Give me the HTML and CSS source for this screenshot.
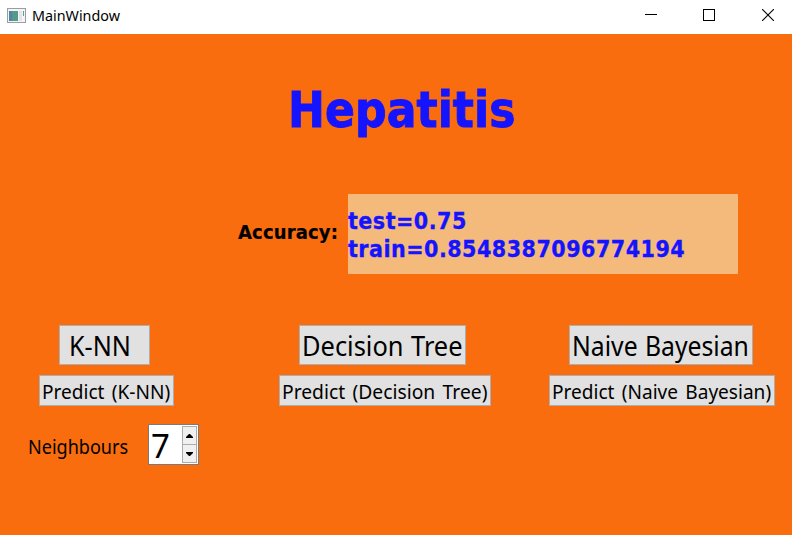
FILE: index.html
```html
<!DOCTYPE html>
<html lang="en">
<head>
<meta charset="utf-8">
<title>MainWindow</title>
<link rel="stylesheet" href="styles.css">
</head>
<body>
<header class="titlebar">
  <svg class="app-icon" width="19" height="15" viewBox="0 0 19 15">
    <rect x=".5" y=".5" width="18" height="14" fill="#f4f4f4" stroke="#9a9da1"/>
    <rect x="2" y="3" width="9" height="10" fill="#559987"/>
    <rect x="2" y="3" width="3" height="10" fill="#5485a0"/>
    <rect x="12" y="3" width="3" height="10" fill="#e2e6ea"/>
    <path d="M16.5 3v5" stroke="#5da18e"/>
  </svg>
  <span class="window-title">MainWindow</span>
  <div class="controls">
    <svg width="12" height="12"><path d="M0 5.5h12" stroke="#000"/></svg>
    <svg width="12" height="12"><rect x=".5" y=".5" width="11" height="11" fill="none" stroke="#000"/></svg>
    <svg width="12" height="12"><path d="M0 0l12 12M12 0L0 12" stroke="#000" stroke-width="1.1"/></svg>
  </div>
</header>
<main>
  <h1>Hepatitis</h1>
  <section class="accuracy">
    <span class="accuracy-label">Accuracy:</span>
    <div class="result"><span class="test">test=0.75</span><span class="train">train=0.8548387096774194</span></div>
  </section>
  <section class="models">
    <div class="model">
      <button class="big knn"><span>K-NN</span></button>
      <button class="small knn-predict"><span>Predict (K-NN)</span></button>
    </div>
    <div class="model">
      <button class="big tree"><span>Decision Tree</span></button>
      <button class="small tree-predict"><span>Predict (Decision Tree)</span></button>
    </div>
    <div class="model">
      <button class="big bayes"><span>Naive Bayesian</span></button>
      <button class="small bayes-predict"><span>Predict (Naive Bayesian)</span></button>
    </div>
  </section>
  <section class="neighbours">
    <div class="neighbours-label"><span>Neighbours</span></div>
    <div class="spin">
      <span class="value">7</span>
      <div class="steps">
        <i><svg width="7" height="4"><path d="M0 4V3L3 0h1l3 3v1z"/></svg></i>
        <i><svg width="7" height="4"><path d="M0 0v1l3 3h1l3-3V0z"/></svg></i>
      </div>
    </div>
  </section>
</main>
</body>
</html>
```
FILE: styles.css
```css
* { box-sizing: border-box; }
body {
  margin: 0;
  height: 535px;
  overflow: hidden;
  background: #fa6d0e;
  color: #000;
  font-family: "Noto Sans", sans-serif;
  white-space: nowrap;
}
svg { display: block; }
.titlebar {
  display: flex;
  align-items: center;
  height: 34px;
  padding: 0 18px 4px 7px;
  background: #fff;
}
.window-title {
  margin-left: 6px;
  font-size: 15px;
  line-height: 20px;
  transform: scaleX(.955);
  transform-origin: left;
}
.controls { display: flex; gap: 47px; margin-left: auto; }
.controls svg:first-child { margin-right: -1px; }
h1, .accuracy {
  font-family: "DejaVu Sans Condensed", "DejaVu Sans", sans-serif;
  font-stretch: condensed;
  font-weight: 700;
}
h1 {
  margin: 42px 0 0;
  height: 68px;
  padding-left: 288px;
  font-size: 49px;
  line-height: 70px;
  letter-spacing: .1px;
  color: #1414ff;
  -webkit-text-stroke: .9px;
}
button span, .neighbours-label span {
  display: inline-block;
  transform-origin: left;
}
.accuracy {
  display: flex;
  align-items: center;
  margin-top: 50px;
  padding-left: 238px;
}
.accuracy-label {
  width: 110px;
  padding-bottom: 4px;
  font-size: 20px;
  line-height: 24px;
  letter-spacing: .15px;
  -webkit-text-stroke: .2px;
}
.result {
  display: flex;
  flex-direction: column;
  align-items: flex-start;
  justify-content: center;
  width: 390px;
  height: 80px;
  padding-top: 2px;
  background: #f4ba7b;
  color: #1414ff;
  font-size: 23px;
  line-height: 28px;
  letter-spacing: .47px;
  -webkit-text-stroke: .3px;
}
.models {
  display: grid;
  grid-template-columns: 240px 270px 244px;
  margin: 51px 0 0 39px;
}
.model { display: flex; flex-direction: column; align-items: flex-start; gap: 10px; }
button {
  display: flex;
  align-items: center;
  border: 1px solid #adadad;
  background: #e1e1e1;
  color: #000;
  font-family: inherit;
  padding: 0 0 0 2px;
}
.big { height: 40px; margin-left: 20px; font-size: 27.2px; line-height: 38px; padding-top: 1px; }
.small { height: 31px; font-size: 20.4px; line-height: 29px; padding-top: 2px; }
.small span { transform: scaleX(.935); word-spacing: 2.5px; }
.knn { width: 91px; padding-left: 9px; }
.knn span { transform: scaleX(.925); }
.knn-predict { width: 135px; }
.tree { width: 167px; }
.tree span { transform: scaleX(.935); word-spacing: 1px; }
.tree-predict { width: 212px; }
.tree-predict span { transform: scaleX(.945); }
.bayes { width: 184px; }
.bayes span { transform: scaleX(.91); word-spacing: 1px; }
.bayes-predict { width: 226px; }
.neighbours { display: flex; align-items: center; margin: 18px 0 0 28px; }
.neighbours-label { width: 120px; font-size: 20.4px; line-height: 28px; padding-top: 3px; }
.neighbours-label span { transform: scaleX(.885); }
.spin {
  display: flex;
  width: 51px;
  height: 41px;
  border: 1px solid #7a7a7a;
  background: #fff;
}
.value { width: 33px; padding: 2px 0 0 2px; font-size: 33px; line-height: 38px; }
.steps { width: 15px; height: 37px; margin-top: 1px; border: 1px solid #acacac; background: #f0f0f0; }
.steps i { display: flex; align-items: center; justify-content: center; height: 17px; }
.steps i + i { height: 18px; border-top: 1px solid #acacac; }
```
